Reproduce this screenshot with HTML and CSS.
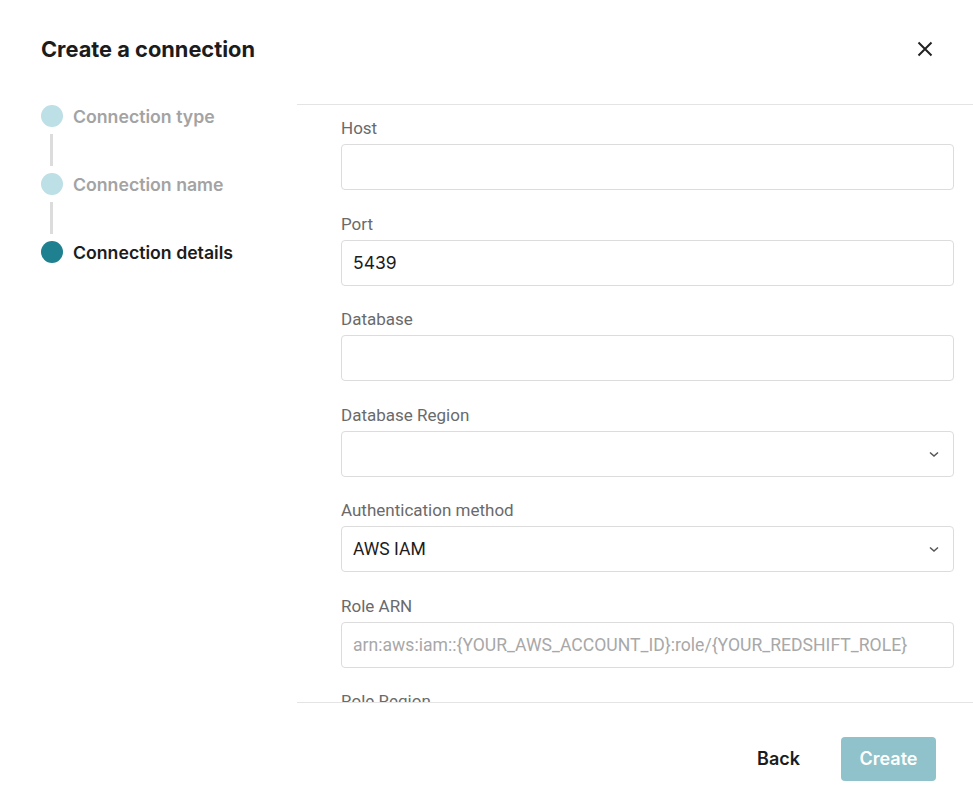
FILE: index.html
```html
<!DOCTYPE html>
<html lang="en">
<head>
    <meta charset="UTF-8">
    <title>Create a connection</title>
    <link rel="stylesheet" href="styles.css">
</head>
<body>
<div class="modal">
    <div class="modal-header">
        <h1 class="modal-title">Create a connection</h1>
        <button class="close-btn" type="button" aria-label="Close">
            <svg width="16" height="16" viewBox="0 0 16 16"><path d="M1.5 1.5l13 13M14.5 1.5l-13 13" stroke="#222" stroke-width="2" fill="none"/></svg>
        </button>
    </div>

    <div class="modal-body">
        <ul class="steps">
            <li class="step done"><span class="dot"></span>Connection type</li>
            <li class="step-line"></li>
            <li class="step done"><span class="dot"></span>Connection name</li>
            <li class="step-line"></li>
            <li class="step active"><span class="dot"></span>Connection details</li>
        </ul>

        <div class="form-panel">
            <div class="field">
                <label>Host</label>
                <input class="text-input" type="text">
            </div>
            <div class="field">
                <label>Port</label>
                <input class="text-input" type="text" value="5439">
            </div>
            <div class="field">
                <label>Database</label>
                <input class="text-input" type="text">
            </div>
            <div class="field">
                <label>Database Region</label>
                <div class="select">
                    <span></span>
                    <svg width="12" height="12" viewBox="0 0 12 12"><path d="M2 4.5l4 3.5 4-3.5" stroke="#555" stroke-width="1.5" fill="none"/></svg>
                </div>
            </div>
            <div class="field">
                <label>Authentication method</label>
                <div class="select">
                    <span>AWS IAM</span>
                    <svg width="12" height="12" viewBox="0 0 12 12"><path d="M2 4.5l4 3.5 4-3.5" stroke="#555" stroke-width="1.5" fill="none"/></svg>
                </div>
            </div>
            <div class="field">
                <label>Role ARN</label>
                <input class="text-input roboto" type="text" placeholder="arn:aws:iam::{YOUR_AWS_ACCOUNT_ID}:role/{YOUR_REDSHIFT_ROLE}">
            </div>
            <div class="field">
                <label>Role Region</label>
                <div class="select">
                    <span></span>
                    <svg width="12" height="12" viewBox="0 0 12 12"><path d="M2 4.5l4 3.5 4-3.5" stroke="#555" stroke-width="1.5" fill="none"/></svg>
                </div>
            </div>
        </div>
    </div>

    <div class="modal-footer">
        <button class="btn-back" type="button">Back</button>
        <button class="btn-create" type="button" disabled>Create</button>
    </div>
</div>
</body>
</html>
```

FILE: styles.css
```css
* {
    margin: 0;
    padding: 0;
    box-sizing: border-box;
}
body {
    background: #fff;
    font-family: Inter, "Noto Sans", sans-serif;
    color: #1c1c1c;
}
.modal {
    width: 973px;
    height: 808px;
    display: flex;
    flex-direction: column;
}

/* header */
.modal-header {
    height: 104px;
    padding: 36px 40px 0 41px;
    display: flex;
    justify-content: space-between;
    align-items: flex-start;
}
.modal-title {
    font-size: 21.8px;
    line-height: 26px;
    font-weight: 700;
    color: #1c1c1c;
}
.close-btn {
    border: none;
    background: none;
    width: 16px;
    height: 16px;
    margin-top: 5px;
    cursor: pointer;
}
.close-btn svg {
    display: block;
}

/* body: stepper + form */
.modal-body {
    display: flex;
    height: 599px;
}
.steps {
    list-style: none;
    width: 297px;
    flex-shrink: 0;
    padding: 1px 0 0 41px;
}
.step {
    display: flex;
    align-items: center;
    gap: 10px;
    height: 22px;
    padding-top: 1px;
    font-size: 17.7px;
    font-weight: 600;
    color: #a3a3a3;
}
.step .dot {
    width: 22px;
    height: 22px;
    margin-top: -1px;
    border-radius: 50%;
    background: #bddfe6;
    flex-shrink: 0;
}
.step.active {
    color: #1c1c1c;
}
.step.active .dot {
    background: #1f8090;
}
.step-line {
    width: 3px;
    height: 32px;
    margin: 7px 0 7px 9px;
    background: #dcdcdc;
}

.form-panel {
    flex: 1;
    border-top: 1px solid #e4e4e4;
    border-bottom: 1px solid #e4e4e4;
    overflow: hidden;
    padding: 11px 19px 0 44px;
}
.field {
    margin-bottom: 21.5px;
}
.field label {
    display: block;
    font-family: Roboto, "Liberation Sans", sans-serif;
    font-size: 17px;
    line-height: 24px;
    height: 24px;
    color: #6a6a6a;
    margin-bottom: 4px;
}
.text-input,
.select {
    display: flex;
    align-items: center;
    width: 100%;
    height: 46px;
    border: 1px solid #dcdcdc;
    border-radius: 4px;
    padding: 0 12px 0 11px;
    background: #fff;
    font-family: Inter, "Noto Sans", sans-serif;
    font-size: 17.5px;
    color: #1c1c1c;
    outline: none;
}
.text-input.roboto {
    font-family: Roboto, "Liberation Sans", sans-serif;
    font-size: 17.6px;
}
.text-input::placeholder {
    color: #a8a8a8;
}
.select {
    justify-content: space-between;
    font-family: Roboto, "Liberation Sans", sans-serif;
    padding-right: 13px;
}

/* footer */
.modal-footer {
    flex: 1;
    display: flex;
    justify-content: flex-end;
    align-items: center;
    padding: 6px 37px 0 0;
}
.btn-back,
.btn-create {
    font-family: Inter, "Noto Sans", sans-serif;
    font-size: 18px;
    font-weight: 600;
    border: none;
    cursor: pointer;
}
.btn-back {
    background: none;
    color: #1c1c1c;
    padding: 0 16px;
    margin-right: 25px;
    height: 44px;
}
.btn-create {
    width: 95px;
    height: 44px;
    border-radius: 4px;
    background: #8fc2ca;
    color: #fff;
}
```
